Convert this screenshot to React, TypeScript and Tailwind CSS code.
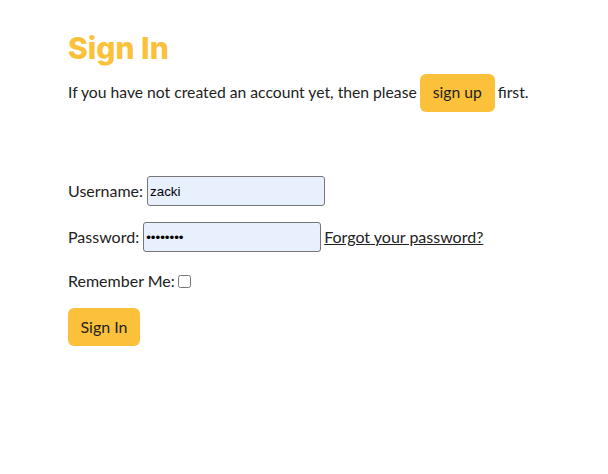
import React from 'react';

export default function App() {
  return (
    <div className="min-h-screen bg-white pl-[68px] pt-[29px] text-[16px] text-[#222] font-['Lato','Liberation_Sans',sans-serif]">
      <h1 className="text-[30px] leading-[38px] font-extrabold text-[#fbc13a] font-['Inter','Liberation_Sans',sans-serif]">
        Sign In
      </h1>
      <p className="mt-[7px] flex items-center h-[38px] text-[15.7px]">
        If you have not created an account yet, then please
        <button className="mx-[3px] h-[38px] w-[75px] rounded-[6px] bg-[#fbc13a] text-[15.7px] text-[#222]">
          sign up
        </button>
        first.
      </p>

      <form className="mt-[64px] flex flex-col">
        <div className="flex items-center h-[30px]">
          <label>Username:</label>
          <input
            type="text"
            defaultValue="zacki"
            className="ml-[4px] h-[30px] w-[178px] rounded-[3px] border border-[#767676] bg-[#e8f0fe] px-[2px] text-[13.33px] text-black font-['Liberation_Sans',Arial,sans-serif]"
          />
        </div>
        <div className="mt-[16px] flex items-center h-[30px]">
          <label>Password:</label>
          <input
            type="password"
            defaultValue="password"
            className="ml-[4px] h-[30px] w-[178px] rounded-[3px] border border-[#767676] bg-[#e8f0fe] px-[2px] text-[13.33px] text-black font-['Liberation_Sans',Arial,sans-serif]"
          />
          <a href="#" className="ml-[3px] underline text-[#222]">
            Forgot your password?
          </a>
        </div>
        <div className="mt-[20px] flex items-center h-[18px]">
          <label>Remember Me:</label>
          <input type="checkbox" className="ml-[3px] h-[13px] w-[13px]" />
        </div>
        <div className="mt-[18px]">
          <button type="submit" className="h-[38px] w-[72px] rounded-[6px] bg-[#fbc13a] text-[16px] text-[#222]">
            Sign In
          </button>
        </div>
      </form>
    </div>
  );
}
